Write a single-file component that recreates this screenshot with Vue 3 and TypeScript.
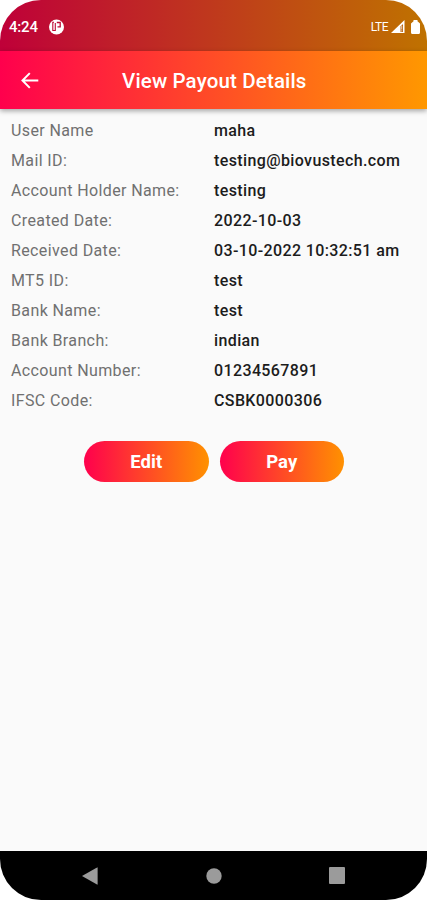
<script setup lang="ts">
interface DetailRow {
  label: string
  value: string
}

const rows: DetailRow[] = [
  { label: 'User Name', value: 'maha' },
  { label: 'Mail ID:', value: 'testing@biovustech.com' },
  { label: 'Account Holder Name:', value: 'testing' },
  { label: 'Created Date:', value: '2022-10-03' },
  { label: 'Received Date:', value: '03-10-2022 10:32:51 am' },
  { label: 'MT5 ID:', value: 'test' },
  { label: 'Bank Name:', value: 'test' },
  { label: 'Bank Branch:', value: 'indian' },
  { label: 'Account Number:', value: '01234567891' },
  { label: 'IFSC Code:', value: 'CSBK0000306' },
]
</script>

<template>
  <div class="phone">
    <div class="status-bar">
      <span class="clock">4:24</span>
      <svg class="notice" width="16" height="16" viewBox="0 0 16 16">
        <circle cx="7.500" cy="8" r="7.500" fill="#fff" />
        <path d="M5 3.300H3.800v8.200H6.300V4" fill="none" stroke="#bd0b36" stroke-width="1.100" />
        <path d="M7.800 3.500h3.400v4.300H8.500" fill="none" stroke="#bd0b36" stroke-width="1.300" />
      </svg>
      <span class="network">LTE</span>
      <svg class="signal" width="14" height="13" viewBox="0 0 14 13">
        <path d="M0 13L13.500 0v13z" fill="#fff" />
        <path d="M9.500 6.500l2.500-2.500v8H9.500z" fill="#bd6714" />
        <path d="M10.700 6v3.500M10.700 10.300v1.200" fill="none" stroke="#fff" stroke-opacity=".7" stroke-width="1" />
      </svg>
      <svg class="battery" width="9" height="14" viewBox="0 0 9 14">
        <path d="M2.500 0h4v1.300L9 3.500V12.500Q9 14 7.500 14h-6Q0 14 0 12.500v-9L2.500 1.300z" fill="#fff" />
      </svg>
    </div>
    <header class="app-bar">
      <svg class="back" width="18" height="17" viewBox="0 0 18 17">
        <path d="M17.300 8.500H1.500M8.800 1.100L1.500 8.500l7.300 7.400" fill="none" stroke="#fff" stroke-width="2" />
      </svg>
      <h1 class="title">View Payout Details</h1>
    </header>
    <main class="content">
      <dl class="details">
        <div v-for="row in rows" :key="row.label" class="row">
          <dt>{{ row.label }}</dt>
          <dd>{{ row.value }}</dd>
        </div>
      </dl>
      <div class="actions">
        <button type="button">Edit</button>
        <button type="button">Pay</button>
      </div>
    </main>
    <nav class="nav-bar">
      <svg width="16" height="18" viewBox="0 0 16 18">
        <path d="M0 9L15 .4q.6-.2.600.400v16.400q0 .6-.6.400z" fill="#9b9b9b" />
      </svg>
      <svg width="16" height="16" viewBox="0 0 16 16">
        <circle cx="8" cy="8" r="7.700" fill="#9b9b9b" />
      </svg>
      <svg width="16" height="17" viewBox="0 0 16 17">
        <rect width="16" height="17" rx="1" fill="#9b9b9b" />
      </svg>
    </nav>
  </div>
</template>

<style>
body {
  background: #fff;
}
</style>

<style scoped>
.phone {
  display: flex;
  flex-direction: column;
  width: 427px;
  height: 900px;
  border-radius: 41px;
  overflow: hidden;
  background: #fafafa;
  font-family: Roboto, sans-serif;
}

.status-bar {
  box-sizing: border-box;
  display: flex;
  align-items: center;
  height: 51px;
  padding: 2px 7px 0 9px;
  background: linear-gradient(90deg, #bf0039, #bf7200);
  color: #fff;
}

.clock {
  width: 40px;
  font-size: 15px;
  font-weight: 500;
  line-height: 18px;
  letter-spacing: -0.2px;
}

.network {
  margin-left: auto;
  font-size: 12px;
  letter-spacing: -0.5px;
}

.signal {
  margin-left: 3px;
}

.battery {
  margin-left: 6px;
}

.app-bar {
  position: relative;
  display: flex;
  flex: none;
  align-items: center;
  height: 58px;
  padding-left: 21px;
  background: linear-gradient(90deg, #ff004d, #ff9800);
  box-shadow: 0 2px 5px rgba(0, 0, 0, 0.35);
}

.title {
  margin: 2px 0 0 83px;
  color: #fff;
  font-size: 20.5px;
  font-weight: 500;
  line-height: 24px;
  letter-spacing: 0.15px;
}

.content {
  flex: 1;
  padding-top: 6px;
}

.details {
  margin: 0;
  padding-left: 11px;
}

.row {
  display: grid;
  grid-template-columns: 203px 1fr;
  height: 30px;
  align-items: center;
  font-size: 16px;
  letter-spacing: 0.38px;
  white-space: nowrap;
}

dt {
  color: #707070;
}

dd {
  margin: 0;
  color: #1c1c1c;
  font-weight: 500;
}

.actions {
  display: flex;
  gap: 11px;
  padding: 26px 0 0 84px;
}

button {
  width: 124.5px;
  height: 41px;
  padding: 0;
  border: 0;
  border-radius: 21px;
  background: linear-gradient(90deg, #ff004d, #ff9100);
  color: #fff;
  font: 700 18.5px Roboto, sans-serif;
}

.nav-bar {
  box-sizing: border-box;
  display: flex;
  align-items: center;
  justify-content: space-between;
  height: 49px;
  padding: 0 82px;
  background: #000;
}
</style>
